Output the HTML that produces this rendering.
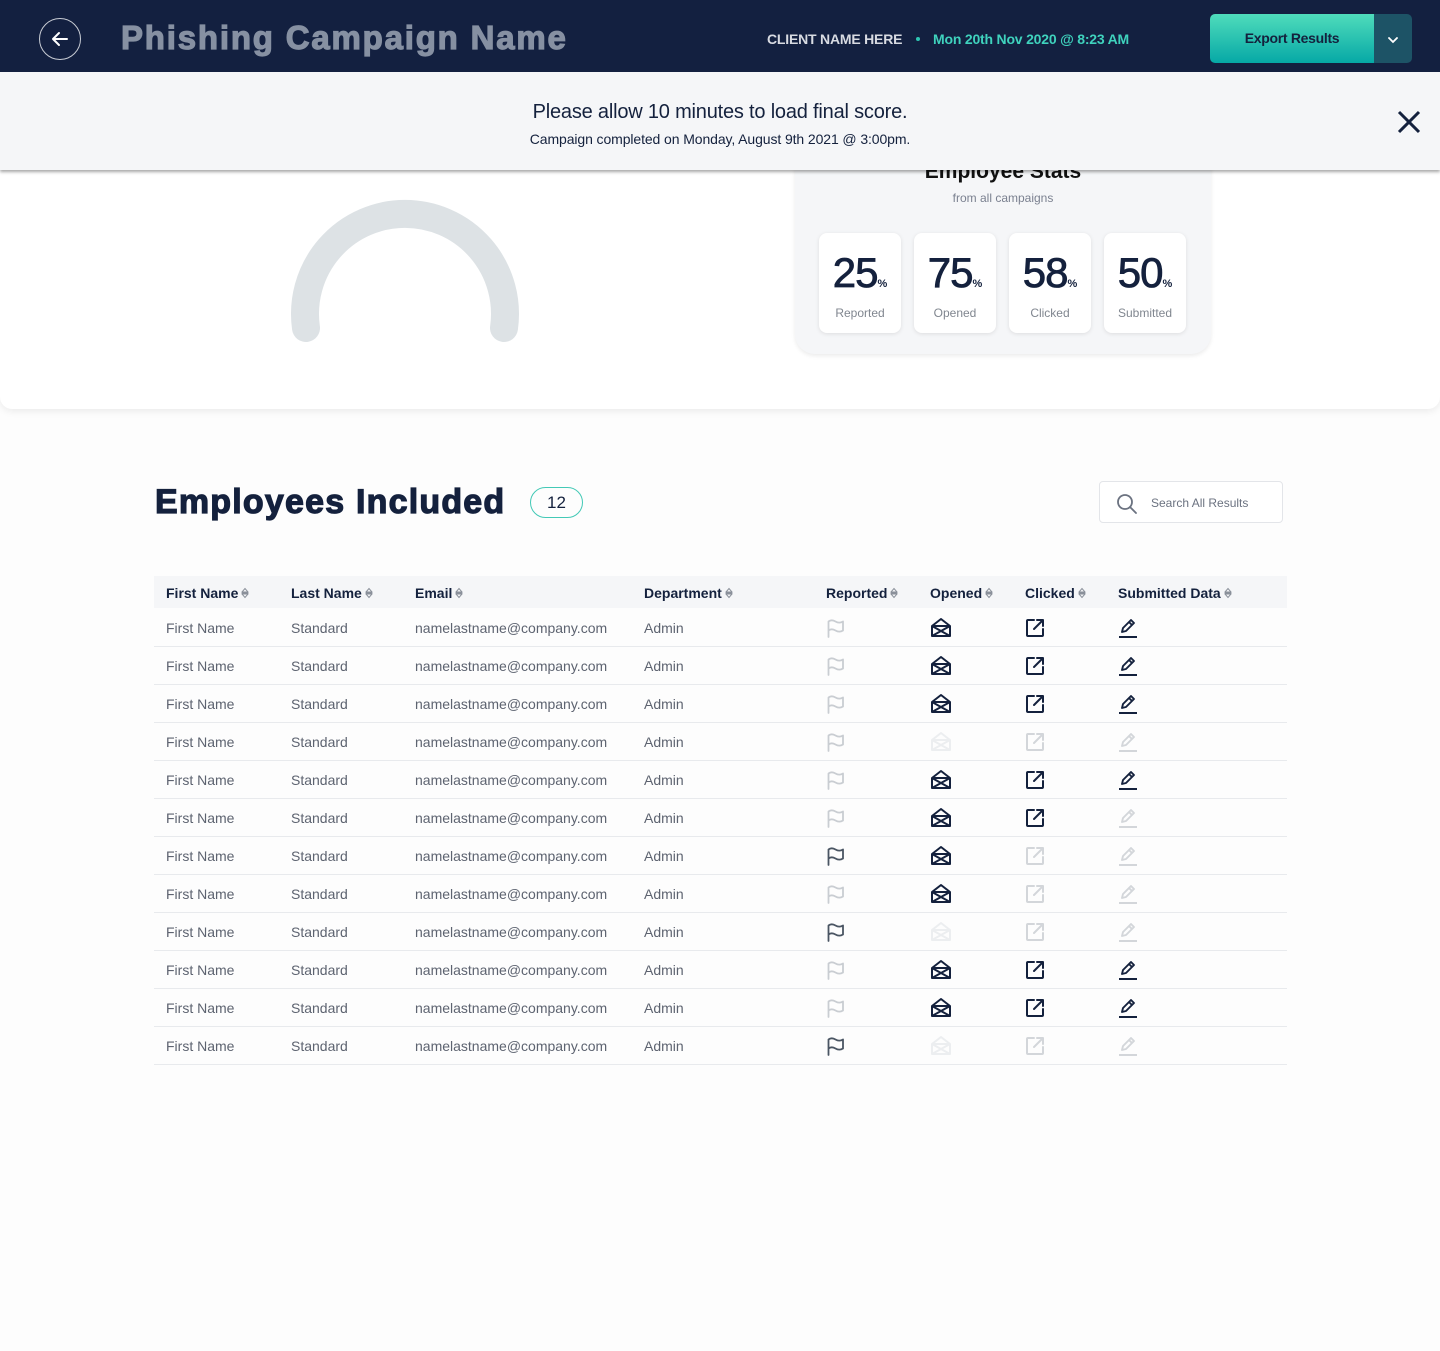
<!DOCTYPE html>
<html><head><meta charset="utf-8"><style>
*{box-sizing:border-box;margin:0;padding:0}
body{width:1440px;height:1351px;background:#fdfdfd;font-family:"Liberation Sans",Arial,sans-serif;color:#14213d;position:relative;overflow:hidden}
.top{position:absolute;left:0;top:0;width:1440px;height:409px;background:#fff;border-radius:0 0 12px 12px;box-shadow:0 2px 8px rgba(0,0,0,.08)}
.hdr{position:absolute;left:0;top:0;width:1440px;height:72px;background:#132040;z-index:5}
.back{position:absolute;left:39px;top:18px;width:42px;height:42px;border:1px solid #c8ccd4;border-radius:50%}
.title{position:absolute;left:121px;top:19px;font-size:33px;font-weight:bold;color:#8690a2;letter-spacing:1.8px;-webkit-text-stroke:1.2px #8690a2}
.client{position:absolute;left:767px;top:31px;font-size:14px;font-weight:bold;color:#d8dbe2;letter-spacing:-.2px}
.dot{position:absolute;left:916px;top:37px;width:4px;height:4px;border-radius:50%;background:#2dc5b2}
.date{position:absolute;left:933px;top:31px;font-size:14px;font-weight:bold;color:#3fd2bd;letter-spacing:-.2px}
.exp{position:absolute;left:1210px;top:14px;width:164px;height:49px;background:linear-gradient(#4fdcbb,#06a8a6);border-radius:5px 0 0 5px;font-size:14px;font-weight:bold;color:#14213d;text-align:center;line-height:49px;letter-spacing:-.3px}
.dd{position:absolute;left:1374px;top:14px;width:38px;height:49px;background:#1d5366;border-radius:0 5px 5px 0}
.banner{position:absolute;left:0;top:72px;width:1440px;height:98px;background:#f5f6f8;box-shadow:0 2px 3px rgba(0,0,0,.35);z-index:4;text-align:center}
.banner .a{position:absolute;left:0;right:0;top:29px;font-size:20px;color:#14213d;letter-spacing:-.2px}
.banner .b{position:absolute;left:0;right:0;top:59px;font-size:14px;color:#14213d;letter-spacing:-.1px}
.stats{position:absolute;left:795px;top:120px;width:416px;height:234px;background:#f5f6f8;border-radius:20px;box-shadow:0 2px 4px rgba(0,0,0,.08)}
.stats h3{position:absolute;left:0;right:0;top:40px;text-align:center;font-size:21px;color:#111}
.stats .sub{position:absolute;left:0;right:0;top:71px;text-align:center;font-size:12px;color:#7b8190}
.box{position:absolute;top:113px;width:82px;height:100px;background:#fff;border-radius:8px;box-shadow:0 1px 4px rgba(0,0,0,.1);text-align:center}
.box .n{position:absolute;left:0;right:0;top:16px;font-size:42px;color:#14213d;letter-spacing:-1px;-webkit-text-stroke:.8px #14213d}
.box .n small{font-size:11px;font-weight:bold;letter-spacing:0;-webkit-text-stroke:0}
.box .l{position:absolute;left:0;right:0;top:73px;font-size:12px;color:#80868f}
h2{position:absolute;left:155px;top:483px;font-size:34px;font-weight:900;color:#14213d;letter-spacing:1.2px;-webkit-text-stroke:1.2px #14213d}
.cnt{position:absolute;left:530px;top:487px;width:53px;height:31px;border:1px solid #43c9b6;border-radius:16px;text-align:center;line-height:29px;font-size:17px}
.search{position:absolute;left:1099px;top:481px;width:184px;height:42px;border:1px solid #e3e5e9;border-radius:4px;background:#fff}
.search span{position:absolute;left:51px;top:14px;font-size:12px;color:#6b7280}
table{position:absolute;left:154px;top:576px;width:1133px;border-collapse:collapse}
th{height:32px;background:#f5f6f8;text-align:left;font-size:14px;font-weight:bold;color:#14213d;padding:0;padding-top:2px;white-space:nowrap}
td{height:38px;border-bottom:1px solid #e8eaed;font-size:14px;color:#5d6370;padding:0;padding-top:2px}
th:first-child,td:first-child{padding-left:12px}
.s{display:inline-block;vertical-align:-1px;margin-left:2px}
td svg{display:block}
</style></head><body>
<svg width="0" height="0" style="position:absolute">
<defs>
<symbol id="so" viewBox="0 0 10 12"><path d="M2 5L5 1.5 8 5zM2 7l3 3.5L8 7z" fill="none" stroke="#8a909a" stroke-width="1"/><path d="M2 6h6" stroke="#8a909a" stroke-width="1"/></symbol>
<symbol id="fl" viewBox="0 0 20 20"><path d="M2.5 19V3.5c2-1.5 4.5-1.5 7 0s5 1.5 7.5 0v9c-2.5 1.5-5 1.5-7.5 0s-5-1.5-7 0" fill="none" stroke="currentColor" stroke-width="1.8" stroke-linejoin="round" stroke-linecap="round"/></symbol>
<symbol id="en" viewBox="0 0 22 22"><path d="M2 9L11 2l9 7v10H2z" fill="none" stroke="currentColor" stroke-width="2" stroke-linejoin="round"/><path d="M2 9l18 10M20 9L2 19M2 9h18" fill="none" stroke="currentColor" stroke-width="2"/></symbol>
<symbol id="ck" viewBox="0 0 20 20"><path d="M9 2H3a1 1 0 0 0-1 1v14a1 1 0 0 0 1 1h14a1 1 0 0 0 1-1v-6" fill="none" stroke="currentColor" stroke-width="2" stroke-linecap="round"/><path d="M9 11l8-8M12 2h6v6" fill="none" stroke="currentColor" stroke-width="2" stroke-linecap="round" stroke-linejoin="round"/></symbol>
<symbol id="pn" viewBox="0 0 20 20"><path d="M4 14l1-4 8-8 3 3-8 8zM11 4l3 3" fill="none" stroke="currentColor" stroke-width="1.9" stroke-linejoin="round"/><path d="M1 19h18" stroke="currentColor" stroke-width="2"/></symbol>
</defs></svg>

<div class="top">
<svg style="position:absolute;left:280px;top:190px" width="250" height="170"><path d="M26 138 A100 100 0 1 1 224 138" fill="none" stroke="#dde2e5" stroke-width="28" stroke-linecap="round"/></svg>
<div class="stats"><h3>Employee Stats</h3><div class="sub">from all campaigns</div>
<div class="box" style="left:24px"><div class="n">25<small>%</small></div><div class="l">Reported</div></div>
<div class="box" style="left:119px"><div class="n">75<small>%</small></div><div class="l">Opened</div></div>
<div class="box" style="left:214px"><div class="n">58<small>%</small></div><div class="l">Clicked</div></div>
<div class="box" style="left:309px"><div class="n">50<small>%</small></div><div class="l">Submitted</div></div>
</div>
</div>

<div class="hdr">
<div class="back"><svg width="42" height="42" style="position:absolute;left:-1px;top:-1px"><path d="M28 21H14M20 15l-6 6 6 6" fill="none" stroke="#fff" stroke-width="2" stroke-linecap="round" stroke-linejoin="round"/></svg></div>
<div class="title">Phishing Campaign Name</div>
<div class="client">CLIENT NAME HERE</div><div class="dot"></div>
<div class="date">Mon 20th Nov 2020 @ 8:23 AM</div>
<div class="exp">Export Results</div>
<div class="dd"><svg width="38" height="49"><path d="M15 24l4 4 4-4" fill="none" stroke="#fff" stroke-width="1.8" stroke-linecap="round"/></svg></div>
</div>
<div class="banner"><div class="a">Please allow 10 minutes to load final score.</div><div class="b">Campaign completed on Monday, August 9th 2021 @ 3:00pm.</div>
<svg style="position:absolute;left:1397px;top:38px" width="24" height="24"><path d="M2 2l20 20M22 2L2 22" stroke="#14213d" stroke-width="3"/></svg></div>

<h2>Employees Included</h2>
<div class="cnt">12</div>
<div class="search"><svg style="position:absolute;left:16px;top:11px" width="22" height="22"><circle cx="9" cy="9" r="7" fill="none" stroke="#6b7280" stroke-width="1.8"/><path d="M14 14l6 6" stroke="#6b7280" stroke-width="1.8" stroke-linecap="round"/></svg><span>Search All Results</span></div>

<table>
<colgroup><col style="width:137px"><col style="width:124px"><col style="width:229px"><col style="width:182px"><col style="width:104px"><col style="width:95px"><col style="width:93px"><col></colgroup>
<tr><th>First Name<svg class="s" width="10" height="12"><use href="#so"/></svg></th><th>Last Name<svg class="s" width="10" height="12"><use href="#so"/></svg></th><th>Email<svg class="s" width="10" height="12"><use href="#so"/></svg></th><th>Department<svg class="s" width="10" height="12"><use href="#so"/></svg></th><th>Reported<svg class="s" width="10" height="12"><use href="#so"/></svg></th><th>Opened<svg class="s" width="10" height="12"><use href="#so"/></svg></th><th>Clicked<svg class="s" width="10" height="12"><use href="#so"/></svg></th><th>Submitted Data<svg class="s" width="10" height="12"><use href="#so"/></svg></th></tr>
<tr><td>First Name</td><td>Standard</td><td>namelastname@company.com</td><td>Admin</td><td><svg width="20" height="20" style="color:#c9cdd2"><use href="#fl"/></svg></td><td><svg width="22" height="22" style="color:#14213d"><use href="#en"/></svg></td><td><svg width="20" height="20" style="color:#14213d"><use href="#ck"/></svg></td><td><svg width="20" height="20" style="color:#14213d"><use href="#pn"/></svg></td></tr>
<tr><td>First Name</td><td>Standard</td><td>namelastname@company.com</td><td>Admin</td><td><svg width="20" height="20" style="color:#c9cdd2"><use href="#fl"/></svg></td><td><svg width="22" height="22" style="color:#14213d"><use href="#en"/></svg></td><td><svg width="20" height="20" style="color:#14213d"><use href="#ck"/></svg></td><td><svg width="20" height="20" style="color:#14213d"><use href="#pn"/></svg></td></tr>
<tr><td>First Name</td><td>Standard</td><td>namelastname@company.com</td><td>Admin</td><td><svg width="20" height="20" style="color:#c9cdd2"><use href="#fl"/></svg></td><td><svg width="22" height="22" style="color:#14213d"><use href="#en"/></svg></td><td><svg width="20" height="20" style="color:#14213d"><use href="#ck"/></svg></td><td><svg width="20" height="20" style="color:#14213d"><use href="#pn"/></svg></td></tr>
<tr><td>First Name</td><td>Standard</td><td>namelastname@company.com</td><td>Admin</td><td><svg width="20" height="20" style="color:#c9cdd2"><use href="#fl"/></svg></td><td><svg width="22" height="22" style="color:#eceef0"><use href="#en"/></svg></td><td><svg width="20" height="20" style="color:#d3d6da"><use href="#ck"/></svg></td><td><svg width="20" height="20" style="color:#d3d6da"><use href="#pn"/></svg></td></tr>
<tr><td>First Name</td><td>Standard</td><td>namelastname@company.com</td><td>Admin</td><td><svg width="20" height="20" style="color:#c9cdd2"><use href="#fl"/></svg></td><td><svg width="22" height="22" style="color:#14213d"><use href="#en"/></svg></td><td><svg width="20" height="20" style="color:#14213d"><use href="#ck"/></svg></td><td><svg width="20" height="20" style="color:#14213d"><use href="#pn"/></svg></td></tr>
<tr><td>First Name</td><td>Standard</td><td>namelastname@company.com</td><td>Admin</td><td><svg width="20" height="20" style="color:#c9cdd2"><use href="#fl"/></svg></td><td><svg width="22" height="22" style="color:#14213d"><use href="#en"/></svg></td><td><svg width="20" height="20" style="color:#14213d"><use href="#ck"/></svg></td><td><svg width="20" height="20" style="color:#d3d6da"><use href="#pn"/></svg></td></tr>
<tr><td>First Name</td><td>Standard</td><td>namelastname@company.com</td><td>Admin</td><td><svg width="20" height="20" style="color:#4a5563"><use href="#fl"/></svg></td><td><svg width="22" height="22" style="color:#14213d"><use href="#en"/></svg></td><td><svg width="20" height="20" style="color:#d3d6da"><use href="#ck"/></svg></td><td><svg width="20" height="20" style="color:#d3d6da"><use href="#pn"/></svg></td></tr>
<tr><td>First Name</td><td>Standard</td><td>namelastname@company.com</td><td>Admin</td><td><svg width="20" height="20" style="color:#c9cdd2"><use href="#fl"/></svg></td><td><svg width="22" height="22" style="color:#14213d"><use href="#en"/></svg></td><td><svg width="20" height="20" style="color:#d3d6da"><use href="#ck"/></svg></td><td><svg width="20" height="20" style="color:#d3d6da"><use href="#pn"/></svg></td></tr>
<tr><td>First Name</td><td>Standard</td><td>namelastname@company.com</td><td>Admin</td><td><svg width="20" height="20" style="color:#4a5563"><use href="#fl"/></svg></td><td><svg width="22" height="22" style="color:#eceef0"><use href="#en"/></svg></td><td><svg width="20" height="20" style="color:#d3d6da"><use href="#ck"/></svg></td><td><svg width="20" height="20" style="color:#d3d6da"><use href="#pn"/></svg></td></tr>
<tr><td>First Name</td><td>Standard</td><td>namelastname@company.com</td><td>Admin</td><td><svg width="20" height="20" style="color:#c9cdd2"><use href="#fl"/></svg></td><td><svg width="22" height="22" style="color:#14213d"><use href="#en"/></svg></td><td><svg width="20" height="20" style="color:#14213d"><use href="#ck"/></svg></td><td><svg width="20" height="20" style="color:#14213d"><use href="#pn"/></svg></td></tr>
<tr><td>First Name</td><td>Standard</td><td>namelastname@company.com</td><td>Admin</td><td><svg width="20" height="20" style="color:#c9cdd2"><use href="#fl"/></svg></td><td><svg width="22" height="22" style="color:#14213d"><use href="#en"/></svg></td><td><svg width="20" height="20" style="color:#14213d"><use href="#ck"/></svg></td><td><svg width="20" height="20" style="color:#14213d"><use href="#pn"/></svg></td></tr>
<tr><td>First Name</td><td>Standard</td><td>namelastname@company.com</td><td>Admin</td><td><svg width="20" height="20" style="color:#4a5563"><use href="#fl"/></svg></td><td><svg width="22" height="22" style="color:#eceef0"><use href="#en"/></svg></td><td><svg width="20" height="20" style="color:#d3d6da"><use href="#ck"/></svg></td><td><svg width="20" height="20" style="color:#d3d6da"><use href="#pn"/></svg></td></tr>
</table>
</body></html>
